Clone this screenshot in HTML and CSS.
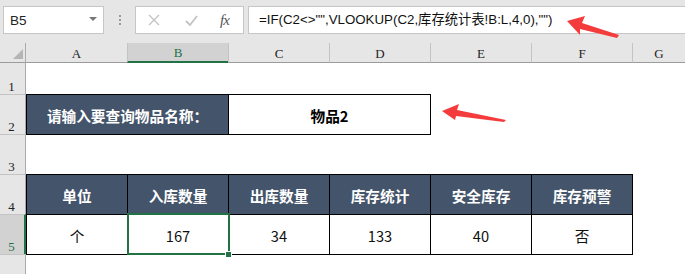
FILE: index.html
```html
<!DOCTYPE html>
<html lang="zh-CN">
<head>
    <meta charset="UTF-8">
    <meta name="viewport" content="width=device-width, initial-scale=1.0">
    <title>库存查询</title>
    <link rel="stylesheet" href="styles.css">
</head>
<body>
    <div class="app">
        <div class="toolbar">
            <div class="namebox">
                <span>B5</span>
                <span class="caret"></span>
            </div>
            <div class="grip"><i></i><i></i><i></i></div>
            <div class="fbtns">
                <span class="btn-x">
                    <svg width="12" height="12" viewBox="0 0 12 12"><path d="M1 1 L11 11 M11 1 L1 11" stroke="#c3c3c3" stroke-width="1.4" fill="none"/></svg>
                </span>
                <span class="btn-ok">
                    <svg width="13" height="11" viewBox="0 0 13 11"><path d="M1 6 L5 10 L12 1" stroke="#c3c3c3" stroke-width="1.8" fill="none"/></svg>
                </span>
                <span class="btn-fx">fx</span>
            </div>
            <div class="formula">=IF(C2&lt;&gt;"",VLOOKUP(C2,库存统计表!B:L,4,0),"")</div>
        </div>

        <div class="sheet">
            <div class="corner"><span class="tri"></span></div>
            <div class="colhead">A</div>
            <div class="colhead active">B</div>
            <div class="colhead">C</div>
            <div class="colhead">D</div>
            <div class="colhead">E</div>
            <div class="colhead">F</div>
            <div class="colhead">G</div>

            <div class="rowhead">1</div>
            <div class="blank row-span"></div>

            <div class="rowhead">2</div>
            <div class="cell dark label">请输入要查询物品名称：</div>
            <div class="cell input">物品2</div>
            <div class="blank wide"></div>

            <div class="rowhead">3</div>
            <div class="blank row-span"></div>

            <div class="rowhead">4</div>
            <div class="cell dark head">单位</div>
            <div class="cell dark head">入库数量</div>
            <div class="cell dark head">出库数量</div>
            <div class="cell dark head">库存统计</div>
            <div class="cell dark head">安全库存</div>
            <div class="cell dark head last">库存预警</div>
            <div class="blank"></div>

            <div class="rowhead active">5</div>
            <div class="cell data">个</div>
            <div class="cell data selected">167</div>
            <div class="cell data">34</div>
            <div class="cell data">133</div>
            <div class="cell data">40</div>
            <div class="cell data last">否</div>
            <div class="blank"></div>

            <div class="rowhead"></div>
            <div class="blank row-span"></div>
        </div>

        <svg class="arrows" width="685" height="274" viewBox="0 0 685 274">
            <polygon points="567,21 585,16 582,23 619,35 617,38 580,29 580,35" fill="#f53c3c"/>
            <polygon points="442,111 459,104 457,110 506,120 504,122 456,116 455,120" fill="#f53c3c"/>
        </svg>
    </div>
</body>
</html>
```

FILE: styles.css
```css
body {
    margin: 0;
    background: #ffffff;
    font-family: "Noto Sans CJK SC", "Noto Sans", sans-serif;
}
.app {
    position: relative;
    width: 685px;
    height: 274px;
    overflow: hidden;
    background: #fff;
}

/* formula bar */
.toolbar {
    height: 43px;
    background: #e6e6e6;
    display: flex;
    align-items: flex-start;
    padding: 6px 0 0 3px;
    box-sizing: border-box;
}
.namebox {
    width: 101px;
    height: 28px;
    box-sizing: border-box;
    background: #fff;
    border: 1px solid #c6c6c6;
    display: flex;
    align-items: center;
    justify-content: space-between;
    padding: 0 6px 0 6px;
    font-family: "Liberation Sans", "Noto Sans CJK SC", sans-serif;
    font-size: 13.5px;
    color: #222;
}
.caret {
    width: 0;
    height: 0;
    border-left: 4px solid transparent;
    border-right: 4px solid transparent;
    border-top: 4px solid #777;
    margin-top: -2px;
}
.grip {
    width: 31px;
    height: 28px;
    display: flex;
    flex-direction: column;
    align-items: center;
    justify-content: center;
    gap: 2px;
}
.grip i {
    width: 2px;
    height: 2px;
    background: #9a9a9a;
}
.fbtns {
    width: 109px;
    height: 28px;
    box-sizing: border-box;
    background: #fff;
    border: 1px solid #c6c6c6;
    display: flex;
    align-items: center;
    padding-left: 12px;
}
.btn-x, .btn-ok {
    display: flex;
    width: 37px;
}
.btn-ok {
    width: 35px;
}
.btn-fx {
    font-family: "Liberation Serif", serif;
    font-style: italic;
    font-size: 15px;
    color: #555;
    letter-spacing: -1px;
}
.formula {
    margin-left: 4px;
    flex: 1;
    height: 28px;
    box-sizing: border-box;
    background: #fff;
    border: 1px solid #c6c6c6;
    border-right: none;
    padding-left: 10px;
    font-family: "Liberation Sans", "Noto Sans CJK SC", sans-serif;
    font-size: 13.3px;
    line-height: 26px;
    color: #111;
    white-space: nowrap;
}

/* sheet grid */
.sheet {
    display: grid;
    grid-template-columns: 26px repeat(6, 101px) 1fr;
    grid-template-rows: 20px 31px 40px 40px 40px 40px 1fr;
    height: 231px;
}
.corner {
    background: #e6e6e6;
    border-right: 1px solid #ababab;
    border-bottom: 1px solid #9b9b9b;
    position: relative;
}
.tri {
    position: absolute;
    right: 2px;
    bottom: 3px;
    width: 0;
    height: 0;
    border-left: 10px solid transparent;
    border-bottom: 10px solid #b5b5b5;
}
.colhead {
    background: #e6e6e6;
    border-bottom: 1px solid #9b9b9b;
    border-left: 1px solid #c4c4c4;
    display: flex;
    align-items: flex-end;
    justify-content: center;
    font-family: "Liberation Serif", serif;
    font-size: 13px;
    line-height: 17px;
    color: #222;
}
.colhead:nth-child(2) {
    border-left: none;
}
.colhead.active {
    background: #d2d2d2;
    border-bottom: 2px solid #217346;
    color: #217346;
}
.rowhead {
    background: #e6e6e6;
    border-right: 1px solid #ababab;
    border-top: 1px solid #c4c4c4;
    display: flex;
    align-items: flex-end;
    justify-content: center;
    font-family: "Liberation Serif", serif;
    font-size: 13px;
    line-height: 15px;
    color: #222;
    padding-right: 2px;
}
.rowhead:nth-child(9) {
    border-top: none;
}
.rowhead.active {
    background: #d2d2d2;
    border-right: 2px solid #217346;
    color: #217346;
    padding-right: 1px;
}
.row-span {
    grid-column: 2 / -1;
}
.wide {
    grid-column: 6 / -1;
}

.cell {
    box-sizing: border-box;
    display: flex;
    align-items: center;
    justify-content: center;
    border-top: 1px solid #000;
    border-left: 1px solid #000;
    font-size: 14.67px;
}
.dark {
    background: #44546a;
    color: #fff;
    font-weight: bold;
}
.label {
    grid-column: span 2;
    border-bottom: 1px solid #000;
    margin-bottom: -1px;
    padding-top: 1px;
}
.input {
    grid-column: span 2;
    background: #fff;
    color: #000;
    font-weight: bold;
    border-right: 1px solid #000;
    border-bottom: 1px solid #000;
    margin-right: -1px;
    margin-bottom: -1px;
    padding-top: 1px;
}
.head {
    padding-top: 1px;
}
.data {
    background: #fff;
    color: #111;
    border-bottom: 1px solid #000;
    margin-bottom: -1px;
    padding-top: 1px;
}
.last {
    border-right: 1px solid #000;
    margin-right: -1px;
}
.selected {
    position: relative;
}
.selected::after {
    content: "";
    position: absolute;
    left: -1px;
    right: -2px;
    top: -2px;
    bottom: -1px;
    border: 2px solid #217346;
}
.selected::before {
    content: "";
    position: absolute;
    right: -3px;
    bottom: -3px;
    width: 5px;
    height: 5px;
    background: #217346;
    box-shadow: 0 0 0 1px #fff;
    z-index: 2;
}

.arrows {
    position: absolute;
    left: 0;
    top: 0;
    pointer-events: none;
}
```
